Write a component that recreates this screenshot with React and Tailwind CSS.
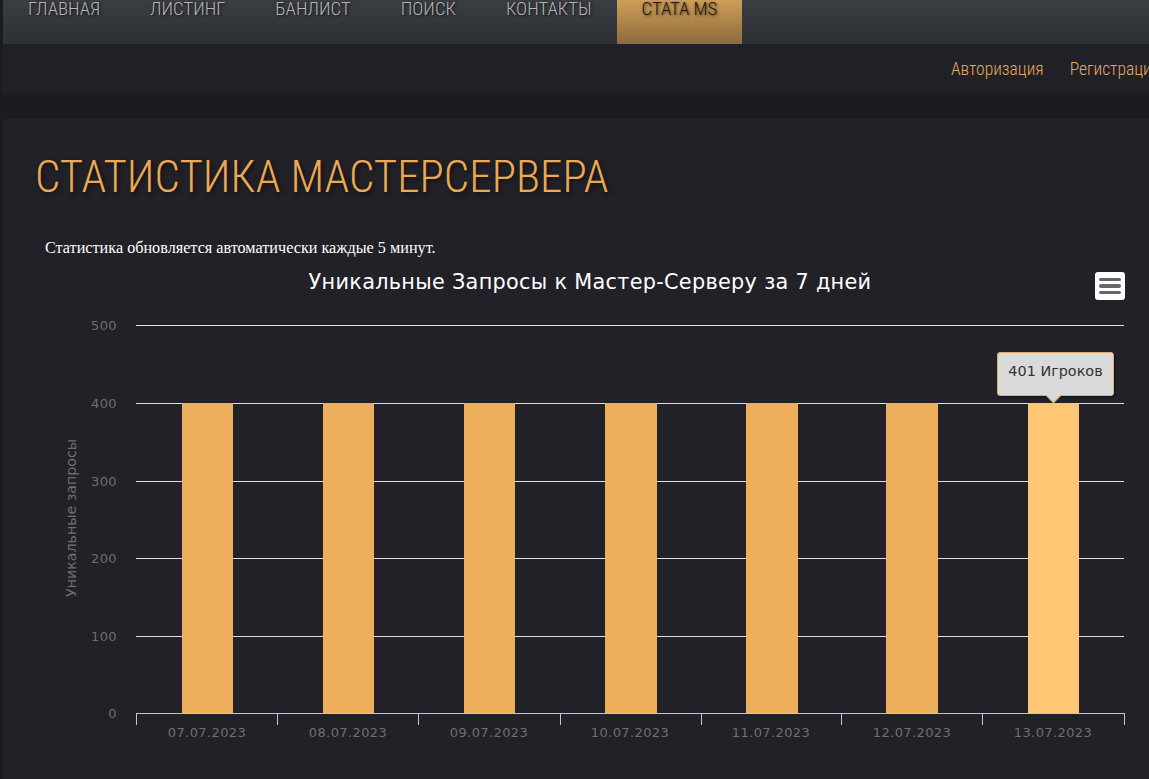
const cond = "font-['Roboto',sans-serif] [font-stretch:75%]";
const nav = ["ГЛАВНАЯ", "ЛИСТИНГ", "БАНЛИСТ", "ПОИСК", "КОНТАКТЫ"];
const gridY = [[500, 325], [400, 403], [300, 481], [200, 558], [100, 636]];
const ticks = [136, 277, 418, 560, 701, 841, 982, 1124];
const bars = [
  [182, 51, "07.07.2023", 207],
  [323, 51, "08.07.2023", 348],
  [464, 51, "09.07.2023", 489],
  [605, 52, "10.07.2023", 630],
  [746, 52, "11.07.2023", 771],
  [886, 52, "12.07.2023", 912],
  [1028, 51, "13.07.2023", 1053],
];
const chartFont = "'DejaVu Sans', sans-serif";

export default function App() {
  return (
    <div className="h-[779px] w-[1149px] overflow-hidden bg-[#1b1c20] pl-[3px]">
      <div className="w-[1200px]">
        <nav className="flex h-11 items-start bg-gradient-to-b from-[#3a3d41] to-[#2d3034]">
          {nav.map((t) => (
            <a key={t} className={`${cond} block px-[25px] text-[18.75px] leading-[19px] font-light text-[#b5b5b5] [text-shadow:1px_1px_3px_#111]`}>{t}</a>
          ))}
          <a className={`${cond} block h-11 bg-gradient-to-b from-[#cf9f58] to-[#8c6a3c] px-[25px] text-[18.75px] leading-[19px] font-light text-[#1c1a18] [text-shadow:1px_1px_3px_#3a2a14]`}>СТАТА MS</a>
        </nav>
        <div className="flex h-[50px] items-center gap-[26px] bg-[#202126] pl-[948px]">
          <a className={`${cond} text-[17.5px] font-light whitespace-nowrap text-[#e8a863]`}>Авторизация</a>
          <a className={`${cond} text-[17.5px] font-light whitespace-nowrap text-[#e8a863]`}>Регистрация</a>
        </div>
        <main className="mt-[25px] h-[660px] bg-[#222127] pt-[30px] pl-[32px]">
          <h1 className={`${cond} text-[45px] leading-[56px] font-light text-[#eba955] [text-shadow:2px_2px_4px_#111]`}>СТАТИСТИКА МАСТЕРСЕРВЕРА</h1>
          <p className="mt-[33px] ml-[10px] font-['Liberation_Serif',serif] text-[16.2px] leading-[20px] text-white">Статистика обновляется автоматически каждые 5 минут.</p>
          <div className="relative mt-[6px] h-[505px] w-[1100px]">
            <svg width="1100" height="505" viewBox="35 264 1100 505" className="block">
              <text x="590" y="289" textAnchor="middle" fill="#fff" fontSize="20.8" letterSpacing="0.3" fontFamily={chartFont}>Уникальные Запросы к Мастер-Серверу за 7 дней</text>
              {gridY.map(([v, y]) => (
                <g key={v}>
                  <line x1="136" x2="1124" y1={y + 0.5} y2={y + 0.5} stroke="#e0e0e0" />
                  <text x="117" y={y + 5} textAnchor="end" fill="#6e6e73" fontSize="13" letterSpacing="0.4" fontFamily={chartFont}>{v}</text>
                </g>
              ))}
              <text x="117" y="718" textAnchor="end" fill="#6e6e73" fontSize="13" letterSpacing="0.4" fontFamily={chartFont}>0</text>
              <text transform="translate(76 518) rotate(-90)" textAnchor="middle" fill="#6e6e73" fontSize="14.2" fontFamily={chartFont}>Уникальные запросы</text>
              {bars.map(([x, w, label, cx], i) => (
                <g key={label}>
                  <rect x={x} y="403" width={w} height="310" fill={i === 6 ? "#ffc774" : "#edaf5c"} />
                  <text x={cx} y="737" textAnchor="middle" fill="#6e6e73" fontSize="13" letterSpacing="0.4" fontFamily={chartFont}>{label}</text>
                </g>
              ))}
              <line x1="136" x2="1124" y1="713.5" y2="713.5" stroke="#c0c6d8" />
              {ticks.map((x) => (
                <line key={x} x1={x + 0.5} x2={x + 0.5} y1="713" y2="725" stroke="#c0c6d8" />
              ))}
            </svg>
            <button className="absolute top-[8px] left-[1060px] flex h-[28px] w-[30px] flex-col items-center justify-center gap-[3px] rounded-[3px] bg-white">
              <span className="h-[3.5px] w-[22px] rounded-full bg-[#666]" />
              <span className="h-[3.5px] w-[22px] rounded-full bg-[#666]" />
              <span className="h-[3.5px] w-[22px] rounded-full bg-[#666]" />
            </button>
            <div className="absolute top-[88px] left-[962px] flex h-[44px] w-[117px] items-center justify-center rounded-[3px] border border-[#e0ad6b] bg-[#dadada] pb-[4px] font-['DejaVu_Sans',sans-serif] text-[14.4px] text-[#333] shadow-[1px_1px_2px_#111]">401 Игроков</div>
            <span className="absolute top-[126px] left-[1012.5px] h-[11px] w-[11px] rotate-45 border-r border-b border-[#e0ad6b] bg-[#dadada]" />
          </div>
        </main>
      </div>
    </div>
  );
}
